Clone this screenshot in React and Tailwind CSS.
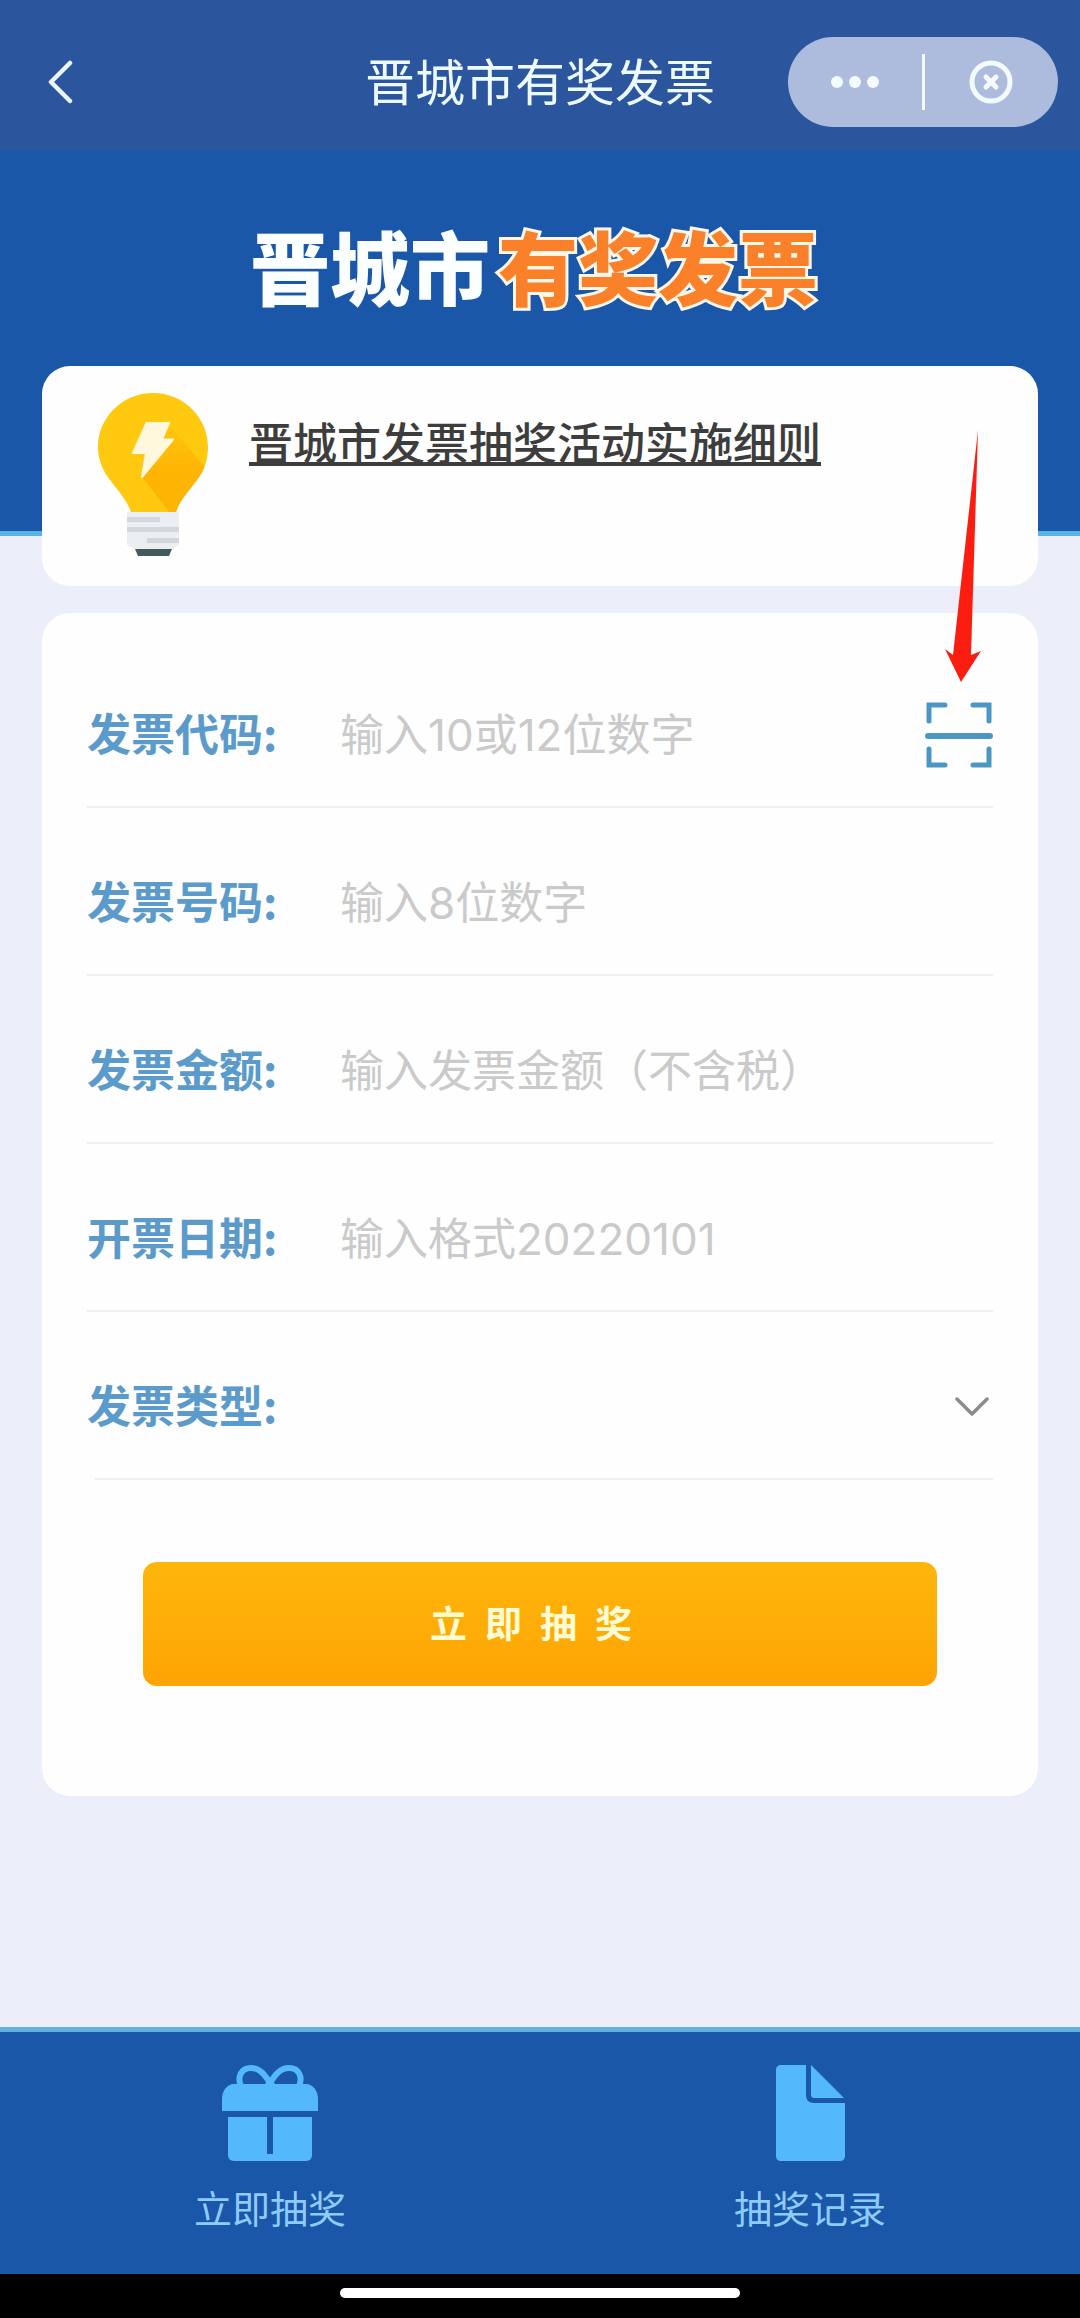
const fields = [
  { id: "code", label: "发票代码:", placeholder: "输入10或12位数字", scan: true },
  { id: "number", label: "发票号码:", placeholder: "输入8位数字" },
  { id: "amount", label: "发票金额:", placeholder: "输入发票金额（不含税）" },
  { id: "date", label: "开票日期:", placeholder: "输入格式20220101" },
];

function BackIcon() {
  return (
    <svg width="26" height="46" viewBox="0 0 26 46" fill="none" stroke="#e9f6ff" strokeWidth="4.5" strokeLinecap="round" strokeLinejoin="round">
      <path d="M22 4 3 23l19 19" />
    </svg>
  );
}

function BulbIcon() {
  const body = "M55 0C24.500 0 0 24.500 0 54c0 13 5 24 12 33 9 12 17 20 21 32h45c4-12 12-20 21-32 7-9 11-20 11-33C110 24.500 85.500 0 55 0Z";
  return (
    <svg width="110" height="163" viewBox="0 0 110 163" className="shrink-0">
      <defs>
        <clipPath id="bulb-body">
          <path d={body} />
        </clipPath>
        <linearGradient id="bulb-shade" x1="0" y1="0" x2="0" y2="1">
          <stop offset="0" stopColor="#fec60c" />
          <stop offset="0.5" stopColor="#feb403" />
        </linearGradient>
      </defs>
      <path d={body} fill="#fec90e" />
      <path d="M71 32 100 66 112 80V125H76L44 84Z" fill="url(#bulb-shade)" clipPath="url(#bulb-body)" />
      <path d="M48.500 30H71L64 46.500H75L44 84 48 60H35Z" fill="#fff8dc" stroke="#fff8dc" strokeWidth="2" strokeLinejoin="round" />
      <path d="M29 119H81V152L74 156H37L29 152Z" fill="#eceff1" />
      <path d="M29 124H62V129H29ZM29 134H81V139H29ZM49 145H81V150H49Z" fill="#d3d7dc" />
      <path d="M37 156H74L71 163H40Z" fill="#455a5c" />
    </svg>
  );
}

function ScanIcon() {
  return (
    <svg width="68" height="66" viewBox="0 0 68 66" fill="none" stroke="#4b97c4" strokeWidth="5" strokeLinecap="round">
      <path d="M4 19V3H20M48 3H64V19M4 47V63H20M48 63H64V47" />
      <path d="M3 34H65" strokeWidth="6" />
    </svg>
  );
}

function GiftIcon() {
  return (
    <svg width="96" height="96" viewBox="0 0 96 96" fill="#54b8fd">
      <path d="M19 21C15 12 19 3 29 3c9 0 14 7 19 15C53 10 58 3 67 3c10 0 14 9 10 18" fill="none" stroke="#54b8fd" strokeWidth="6" />
      <path d="M43 19 48 12 53 19Z" />
      <path d="M12 19H84C91 19 96 26 96 34V46H0V34C0 26 5 19 12 19Z" />
      <path d="M6 52H45V89H51V52H90V90C90 93 88 96 84 96H12C8 96 6 93 6 90Z" />
    </svg>
  );
}

function DocumentIcon() {
  return (
    <svg width="69" height="96" viewBox="0 0 69 96" fill="#54b8fd">
      <path d="M5 0H30V30C30 35 33 38 38 38H69V91C69 94 67 96 64 96H5C2 96 0 94 0 91V5C0 2 2 0 5 0Z" />
      <path d="M35 0 68 33H39C36 33 35 32 35 29Z" />
    </svg>
  );
}

function Tab({ icon, label }) {
  return (
    <button type="button" className="flex flex-1 flex-col items-center gap-[18px] text-[38px] leading-[56px] text-[#8ecbfb]">
      {icon}
      <span>{label}</span>
    </button>
  );
}

export default function App() {
  return (
    <div className="flex min-h-screen flex-col bg-[#eceffa] font-['Noto_Sans_CJK_SC',sans-serif]">
      <header className="grid h-[150px] grid-cols-[1fr_auto_1fr] items-center bg-[#2b559c] pt-3.5">
        <button type="button" aria-label="返回" className="ml-12 justify-self-start">
          <BackIcon />
        </button>
        <h1 className="pb-1.5 text-[50px] leading-[60px] text-[#edfaff]">晋城市有奖发票</h1>
        <div className="mr-[22px] flex h-[90px] w-[270px] items-center justify-self-end rounded-full bg-[#adbbdd]">
          <button type="button" aria-label="更多" className="flex flex-1 justify-center">
            <svg width="48" height="12" viewBox="0 0 48 12" fill="#f4fbff">
              <circle cx="6" cy="6" r="6" />
              <circle cx="24" cy="6" r="6" />
              <circle cx="42" cy="6" r="6" />
            </svg>
          </button>
          <span className="h-14 w-[3px] bg-[#f4fbff]" />
          <button type="button" aria-label="关闭" className="flex flex-1 justify-center">
            <svg width="44" height="44" viewBox="0 0 44 44" fill="none" stroke="#f4fbff" strokeWidth="5" strokeLinecap="round">
              <circle cx="22" cy="22" r="19" />
              <path d="m17 17 10 10M27 17 17 27" />
            </svg>
          </button>
        </div>
      </header>

      <section className="h-[386px] border-b-[5px] border-[#56b5e6] bg-[#1a57a8] pt-[74px]">
        <h2 className="flex justify-center gap-2 pr-3 text-[80px] leading-[80px] font-black text-[#fbffff]">
          <span>晋城市</span>
          <span className="text-[#fa8129] [-webkit-text-stroke:6px_#fff6ea] [paint-order:stroke_fill]">有奖发票</span>
        </h2>
      </section>

      <main className="relative -mt-[170px] flex flex-1 flex-col gap-[27px] px-[42px]">
        <section className="flex h-[220px] items-start rounded-[28px] bg-[#fefefe] pt-[27px] pl-14">
          <BulbIcon />
          <a href="#rules" className="mt-4 ml-[41px] text-[44px] leading-[64px] font-medium text-[#3d3d3d] underline decoration-4 underline-offset-2 [text-decoration-skip-ink:none]">
            晋城市发票抽奖活动实施细则
          </a>
        </section>

        <form className="rounded-[28px] bg-[#fefefe] px-[45px] pt-[27px] pb-[110px]" onSubmit={(e) => e.preventDefault()}>
          {fields.map((f) => (
            <div key={f.id} className="flex h-[168px] items-center border-b-2 border-[#efefef] pt-6 text-[44px] leading-[64px]">
              <label htmlFor={f.id} className="w-[253px] shrink-0 pb-1.5 font-bold text-[#5b9bcb]">
                {f.label}
              </label>
              <input
                id={f.id}
                type="text"
                placeholder={f.placeholder}
                className="min-w-0 flex-1 bg-transparent font-['Inter','Noto_Sans_CJK_SC',sans-serif] text-[#3d3d3d] outline-none placeholder:text-[#cacaca]"
              />
              {f.scan && (
                <div className="relative">
                  <button type="button" aria-label="扫描发票" className="block">
                    <ScanIcon />
                  </button>
                  <svg className="pointer-events-none absolute bottom-full left-5 mb-5" width="36" height="252" viewBox="0 0 36 252" fill="#fb1d10">
                    <path d="M33 0 26 225 36 221 16 252 0 219 8 225Z" />
                  </svg>
                </div>
              )}
            </div>
          ))}
          <div className="ml-2 flex h-[168px] items-center border-b-2 border-[#efefef] pt-6 text-[44px] leading-[64px]">
            <label htmlFor="type" className="-ml-2 w-[253px] shrink-0 pb-1.5 font-bold text-[#5b9bcb]">
              发票类型:
            </label>
            <select id="type" defaultValue="" className="h-16 min-w-0 flex-1 appearance-none bg-transparent text-[#3d3d3d] outline-none">
              <option value=""></option>
            </select>
            <svg className="pointer-events-none mr-1" width="34" height="20" viewBox="0 0 34 20" fill="none" stroke="#8c8c8c" strokeWidth="3.5" strokeLinecap="round" strokeLinejoin="round">
              <path d="m2 2 15 15L32 2" />
            </svg>
          </div>
          <div className="px-14 pt-[82px]">
            <button
              type="submit"
              className="flex h-[124px] w-full items-center justify-center gap-[18px] rounded-[14px] bg-linear-to-b from-[#feb60b] to-[#fea404] pr-[18px] pb-1 text-[37px] leading-[54px] font-bold text-[#fffbd2]"
            >
              <span>立</span>
              <span>即</span>
              <span>抽</span>
              <span>奖</span>
            </button>
          </div>
        </form>
      </main>

      <footer>
        <nav className="flex h-[247px] items-start border-t-[5px] border-[#5fb1de] bg-[#1a57a8] pt-[33px]">
          <Tab icon={<GiftIcon />} label="立即抽奖" />
          <Tab icon={<DocumentIcon />} label="抽奖记录" />
        </nav>
        <div className="flex h-11 justify-center bg-black pt-3.5">
          <span className="h-2.5 w-[400px] rounded-full bg-white" />
        </div>
      </footer>
    </div>
  );
}
